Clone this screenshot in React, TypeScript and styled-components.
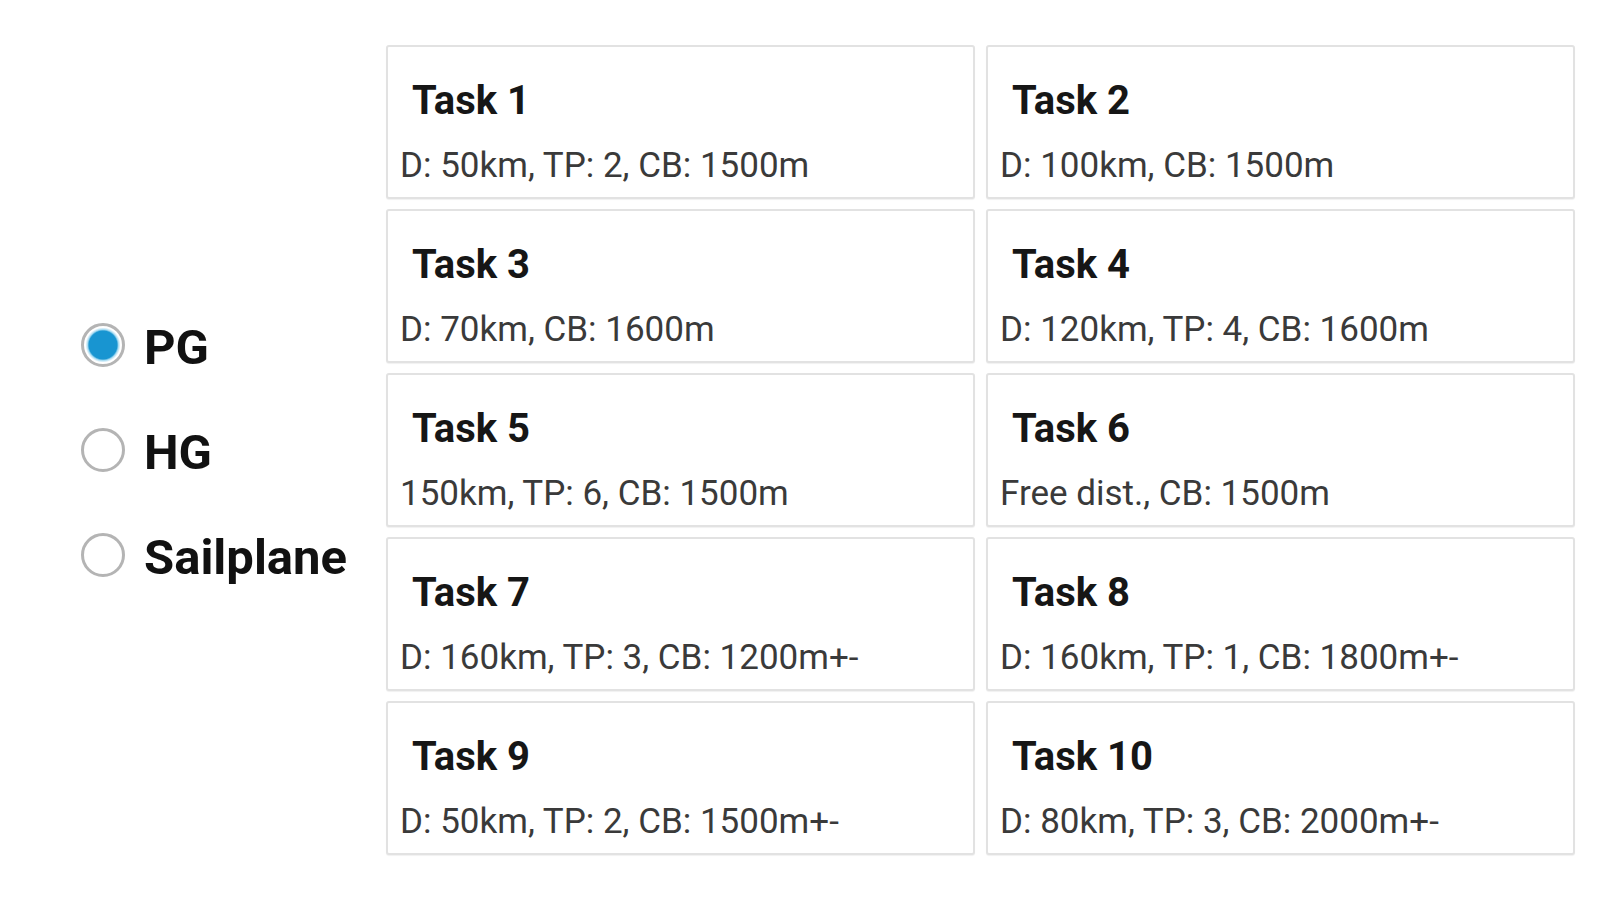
import React, { useState } from 'react';
import styled, { createGlobalStyle } from 'styled-components';

interface Task {
  id: number;
  title: string;
  details: string;
}

const tasks: Task[] = [
  { id: 1, title: 'Task 1', details: 'D: 50km, TP: 2, CB: 1500m' },
  { id: 2, title: 'Task 2', details: 'D: 100km, CB: 1500m' },
  { id: 3, title: 'Task 3', details: 'D: 70km, CB: 1600m' },
  { id: 4, title: 'Task 4', details: 'D: 120km, TP: 4, CB: 1600m' },
  { id: 5, title: 'Task 5', details: '150km, TP: 6, CB: 1500m' },
  { id: 6, title: 'Task 6', details: 'Free dist., CB: 1500m' },
  { id: 7, title: 'Task 7', details: 'D: 160km, TP: 3, CB: 1200m+-' },
  { id: 8, title: 'Task 8', details: 'D: 160km, TP: 1, CB: 1800m+-' },
  { id: 9, title: 'Task 9', details: 'D: 50km, TP: 2, CB: 1500m+-' },
  { id: 10, title: 'Task 10', details: 'D: 80km, TP: 3, CB: 2000m+-' },
];

const craftTypes = ['PG', 'HG', 'Sailplane'];

const GlobalStyle = createGlobalStyle`
  html, body {
    margin: 0;
    padding: 0;
    background: #ffffff;
    font-family: Roboto, "Liberation Sans", Arial, sans-serif;
  }
`;

const Page = styled.div`
  display: flex;
  width: 1600px;
  height: 900px;
  padding-top: 45px;
  box-sizing: border-box;
`;

const Sidebar = styled.div`
  width: 386px;
  height: 810px;
  padding-left: 80px;
  box-sizing: border-box;
  display: flex;
  flex-direction: column;
  justify-content: center;
  gap: 45px;
`;

const RadioRow = styled.label`
  display: flex;
  align-items: center;
  height: 60px;
  cursor: pointer;
`;

const RadioInput = styled.input`
  appearance: none;
  -webkit-appearance: none;
  margin: 0 19px 0 1px;
  width: 44px;
  height: 44px;
  border-radius: 50%;
  border: 3px solid #b4b4b4;
  background: #ffffff;
  box-sizing: border-box;
  cursor: pointer;
  outline: none;

  &:checked {
    background: radial-gradient(
      circle,
      #1895d1 0,
      #1895d1 14px,
      #a9dcf2 15.5px,
      #ffffff 17.5px
    );
  }
`;

const RadioText = styled.span`
  font-size: 49px;
  font-weight: 700;
  line-height: 60px;
  padding-top: 5px;
  color: #111111;
`;

const Grid = styled.div`
  display: grid;
  grid-template-columns: 589px 589px;
  grid-auto-rows: 154px;
  column-gap: 11px;
  row-gap: 10px;
`;

const Card = styled.div`
  box-sizing: border-box;
  border: 2px solid #e2e2e2;
  border-radius: 3px;
  box-shadow: 0 1px 1px rgba(0, 0, 0, 0.06);
  background: #ffffff;
  padding: 34px 0 0 12px;
  cursor: pointer;
`;

const Title = styled.div`
  font-size: 40px;
  font-weight: 700;
  line-height: 40px;
  color: #161616;
  padding-left: 12px;
`;

const Details = styled.div`
  margin-top: 27px;
  font-size: 35px;
  line-height: 35px;
  color: #3a3a3a;
`;

const App: React.FC = () => {
  const [craft, setCraft] = useState('PG');

  return (
    <>
      <GlobalStyle />
      <Page>
        <Sidebar>
          {craftTypes.map((type) => (
            <RadioRow key={type}>
              <RadioInput
                type="radio"
                name="craft"
                checked={craft === type}
                onChange={() => setCraft(type)}
              />
              <RadioText>{type}</RadioText>
            </RadioRow>
          ))}
        </Sidebar>
        <Grid>
          {tasks.map((task) => (
            <Card key={task.id}>
              <Title>{task.title}</Title>
              <Details>{task.details}</Details>
            </Card>
          ))}
        </Grid>
      </Page>
    </>
  );
};

export default App;
